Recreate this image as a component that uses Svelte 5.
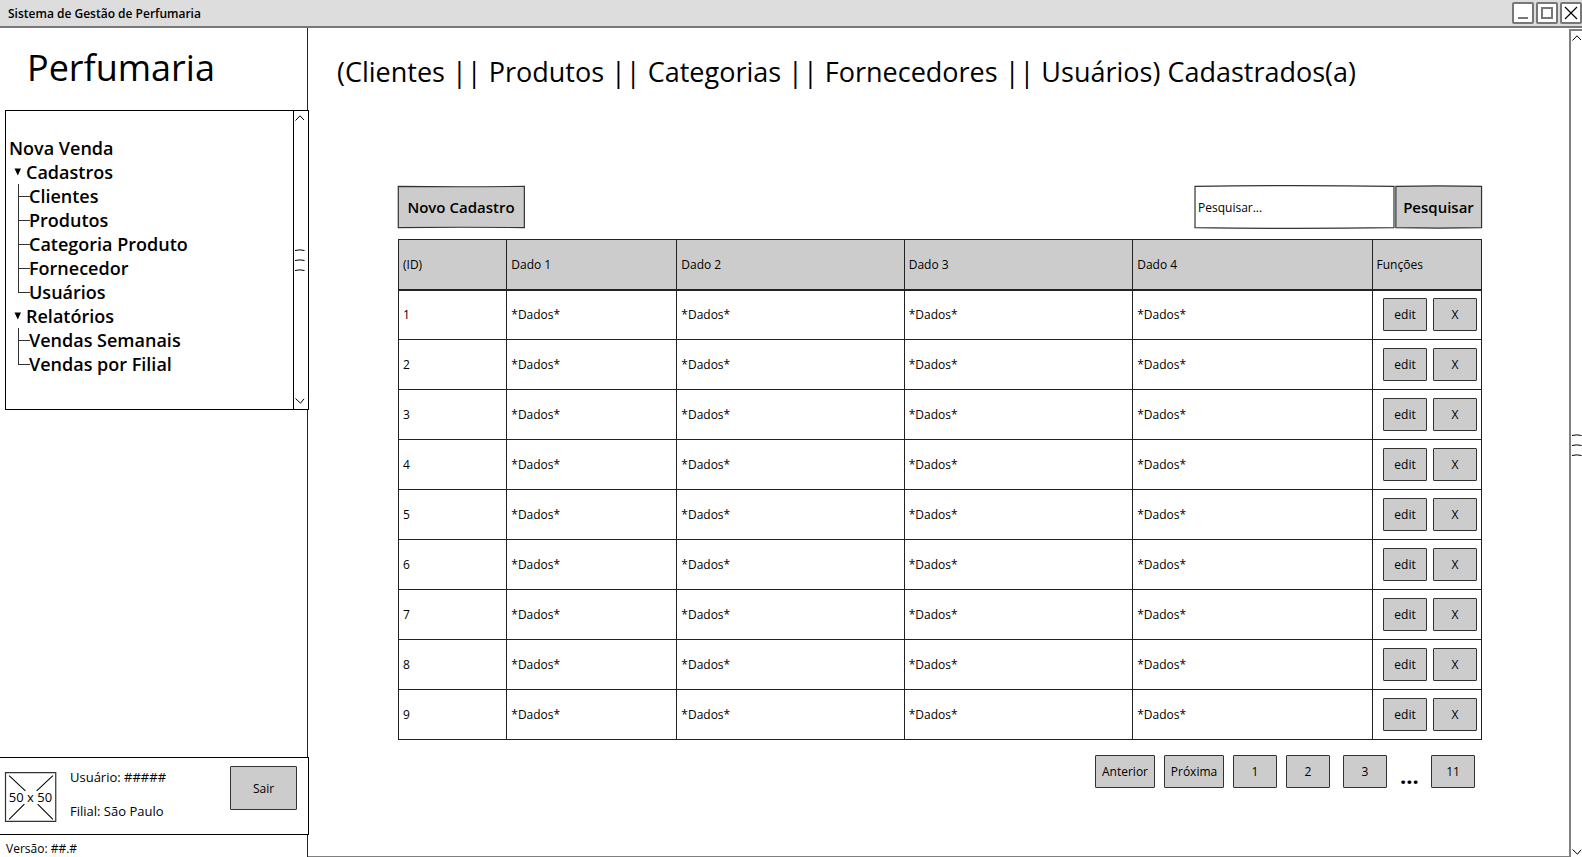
<script>
  const menu = [
    { label: 'Cadastros', items: ['Clientes', 'Produtos', 'Categoria Produto', 'Fornecedor', 'Usuários'] },
    { label: 'Relatórios', items: ['Vendas Semanais', 'Vendas por Filial'] }
  ];
  const columns = ['(ID)', 'Dado 1', 'Dado 2', 'Dado 3', 'Dado 4', 'Funções'];
  const rows = [1, 2, 3, 4, 5, 6, 7, 8, 9];
</script>

{#snippet frame(bend)}
  <svg class="frame" viewBox="0 0 100 100" preserveAspectRatio="none" aria-hidden="true">
    <path d="M1 3 Q50 {3 - bend} 99.5 3 L99.5 97 Q50 {97 + bend} 1 97 Z" vector-effect="non-scaling-stroke" />
  </svg>
{/snippet}

{#snippet scrollbar()}
  <div class="scroll" aria-hidden="true">
    <svg viewBox="0 0 10 6"><path d="M0.5 5.5 L5 0.8 L9 5" /></svg>
    <svg class="grip" viewBox="0 0 10 22"><path d="M0 1.5 Q5 0.2 9.5 1.5 M0 11.5 Q5 10.2 9.5 11.5 M0 21.5 Q5 20.2 9.5 21.5" /></svg>
    <svg viewBox="0 0 10 6"><path d="M0.5 0.5 L5.5 5.2 L9 0.8" /></svg>
  </div>
{/snippet}

<div class="window">
  <header class="titlebar">
    <span>Sistema de Gestão de Perfumaria</span>
    <div class="controls">
      <button aria-label="Minimizar"><svg viewBox="0 0 18 18"><path d="M4 14 H14" stroke="#777" stroke-width="2" /></svg></button>
      <button aria-label="Maximizar"><svg viewBox="0 0 18 18"><path d="M4 4 H14 V14 H4 Z" stroke="#777" stroke-width="2" /></svg></button>
      <button aria-label="Fechar"><svg viewBox="0 0 18 18"><path d="M3 3 L15 15 M15 3 L3 15" stroke="#000" stroke-width="1.2" /></svg></button>
    </div>
  </header>

  <div class="body">
    <aside>
      <h1>Perfumaria</h1>
      <div class="panel">
        <nav>
          <a href="#venda">Nova Venda</a>
          {#each menu as group}
            <div class="group"><svg viewBox="0 0 8 8" aria-hidden="true"><path d="M0.5 0.5 H7 L3.8 7.5 Z" /></svg>{group.label}</div>
            <ul>
              {#each group.items as item}
                <li><a href="#item">{item}</a></li>
              {/each}
            </ul>
          {/each}
        </nav>
        {@render scrollbar()}
      </div>

      <section class="user">
        <div class="avatar">
          {@render frame(0)}
          <svg class="cross" viewBox="0 0 50 50" aria-hidden="true"><path d="M4 4 L20 19 M47 4 L31 19 M4 47 L19 32 M47 47 L32 32" /></svg>
          <span>50 x 50</span>
        </div>
        <div class="info">
          <p>Usuário: #####</p>
          <p>Filial: São Paulo</p>
        </div>
        <button class="btn exit">Sair</button>
      </section>
      <footer>Versão: ##.#</footer>
    </aside>

    <main>
      <h2>(Clientes || Produtos || Categorias || Fornecedores || Usuários) Cadastrados(a)</h2>

      <div class="content">
        <div class="toolbar">
          <button class="sketch">{@render frame(-2)}<span>Novo Cadastro</span></button>
          <form class="search" onsubmit={(e) => e.preventDefault()}>
            <label class="field">
              {@render frame(3)}
              <input type="text" placeholder="Pesquisar..." aria-label="Pesquisar" />
            </label>
            <button class="sketch find">{@render frame(2)}<span>Pesquisar</span></button>
          </form>
        </div>

        <table>
          <colgroup>
            <col style="width: 10%" /><col style="width: 15.7%" /><col style="width: 21%" />
            <col style="width: 21.1%" /><col style="width: 22.1%" /><col />
          </colgroup>
          <thead>
            <tr>{#each columns as column}<th>{column}</th>{/each}</tr>
          </thead>
          <tbody>
            {#each rows as id}
              <tr>
                <td>{id}</td>
                <td>*Dados*</td><td>*Dados*</td><td>*Dados*</td><td>*Dados*</td>
                <td class="actions">
                  <div><button class="btn">edit</button><button class="btn">X</button></div>
                </td>
              </tr>
            {/each}
          </tbody>
        </table>

        <div class="pages">
          <div class="near">
            <button class="btn wide">Anterior</button>
            <button class="btn wide">Próxima</button>
            <button class="btn">1</button>
            <button class="btn">2</button>
          </div>
          <div class="far">
            <button class="btn">3</button>
            <span class="dots">...</span>
            <button class="btn">11</button>
          </div>
        </div>
      </div>
    </main>
    {@render scrollbar()}
  </div>
</div>

<style>
  :global(body) { margin: 0; background: #fff; }
  * { box-sizing: border-box; }
  .window {
    min-height: 100vh;
    display: flex;
    flex-direction: column;
    overflow: hidden;
    font-family: "Comic Sans MS", "Open Sans", sans-serif;
    font-size: 12px;
    color: #000;
  }
  button, input { font: inherit; color: inherit; }
  button { padding: 0; cursor: pointer; }
  a { color: inherit; text-decoration: none; }
  h1, h2 { margin: 0; font-weight: 400; }
  p, ul { margin: 0; padding: 0; }
  svg { display: block; fill: none; stroke: #000; }

  .titlebar {
    height: 28px;
    display: flex;
    align-items: center;
    justify-content: space-between;
    padding: 0 0 0 8px;
    background: #ddd;
    border-bottom: 2px solid #777;
    font-weight: 600;
  }
  .controls { display: flex; gap: 2px; }
  .controls button {
    width: 22px;
    height: 22px;
    border: 2px solid #777;
    border-radius: 2px;
    background: #fff;
  }

  .body { flex: 1; display: flex; }
  aside {
    width: 308px;
    flex: none;
    display: flex;
    flex-direction: column;
    border-right: 1px solid #222;
  }
  h1 { font-size: 36px; line-height: 48px; padding: 16px 0 18px 27px; }
  .panel {
    display: flex;
    height: 300px;
    margin: 0 -2px 0 5px;
    border: 1px solid #000;
    background: #fff;
  }
  nav { flex: 1; padding: 25px 0 0 3px; font-size: 18px; font-weight: 600; line-height: 24px; }
  nav > a { display: block; }
  .group { display: flex; align-items: center; gap: 4px; padding-left: 5px; }
  .group svg { width: 8px; height: 8px; fill: #000; stroke: none; }
  ul { list-style: none; margin-left: 9px; }
  li { display: flex; position: relative; height: 24px; padding-left: 11px; }
  li::before {
    content: "";
    position: absolute;
    left: 0;
    top: 0;
    width: 11px;
    height: 12px;
    border-left: 1px solid #333;
    border-bottom: 1px solid #333;
  }
  li:not(:last-child)::after {
    content: "";
    position: absolute;
    left: 0;
    top: 12px;
    height: 12px;
    border-left: 1px solid #333;
  }

  .scroll {
    width: 15px;
    flex: none;
    display: flex;
    flex-direction: column;
    align-items: center;
    justify-content: space-between;
    padding: 4px 3px 5px 1px;
    border-left: 1px solid #000;
  }
  .scroll svg { width: 10px; height: 6px; }
  .scroll .grip { height: 22px; }
  .body > .scroll { width: 13px; margin-top: 1px; border-left: 2px solid #7f7f7f; border-top: 2px solid #7f7f7f; padding: 4px 0 2px 1px; }

  .user {
    display: flex;
    height: 78px;
    margin: auto -2px 0 0;
    padding-left: 5px;
    border: 1px solid #000;
    border-left: 0;
    background: #fff;
  }
  .avatar { position: relative; width: 51px; height: 52px; margin-top: 13px; display: grid; place-items: center; font-size: 13px; white-space: nowrap; }
  .avatar span { position: relative; }
  .cross { position: absolute; inset: 0; width: 100%; height: 100%; }
  .info { flex: 1; padding: 8px 0 0 14px; font-size: 13px; line-height: 22px; display: flex; flex-direction: column; gap: 12px; }
  footer { height: 22px; padding: 6px 0 0 6px; line-height: 16px; }

  .btn {
    width: 44px;
    height: 33px;
    border: 1px solid #333;
    border-radius: 1px;
    background: #ccc;
  }
  .btn.wide { width: 60px; }
  .btn.exit { width: 67px; height: 44px; margin: 8px 11px 0 0; }

  main { flex: 1; min-width: 0; border-bottom: 1px solid #7f7f7f; }
  h2 { font-size: 27px; line-height: 40px; padding: 24px 0 0 29px; white-space: nowrap; }
  .content { margin: 93px 87px 0 90px; }
  .toolbar { display: flex; justify-content: space-between; height: 44px; margin: 0 0 10px -1px; }
  .frame { position: absolute; inset: 0; width: 100%; height: 100%; overflow: visible; }
  .frame path { stroke: #333; stroke-width: 1.2; }
  .sketch {
    position: relative;
    width: 128px;
    border: 0;
    background: none;
    font-size: 15px;
    font-weight: 600;
    white-space: nowrap;
  }
  .sketch .frame path { fill: #ccc; }
  .sketch span { position: relative; }
  .find { width: 87px; }
  .search { display: flex; }
  .field { position: relative; width: 202px; }
  .field input { position: relative; width: 100%; height: 100%; padding: 0 5px; border: 0; background: none; outline: 0; }
  .field input::placeholder { color: #000; opacity: 1; }

  table { width: 100%; table-layout: fixed; border-collapse: collapse; }
  th, td { height: 50px; padding: 0 4px; border: 1px solid #222; text-align: left; font-weight: 400; }
  th { background: #ccc; }
  thead th { border-bottom: 2px solid #222; }
  .actions div { display: flex; justify-content: flex-end; gap: 6px; }

  .pages { display: flex; justify-content: flex-end; gap: 13px; padding: 15px 7px 0 0; }
  .near { display: flex; gap: 9px; }
  .far { display: flex; gap: 13px; }
  .dots { width: 18px; font-size: 22px; line-height: 40px; font-weight: 700; text-align: center; }
</style>
